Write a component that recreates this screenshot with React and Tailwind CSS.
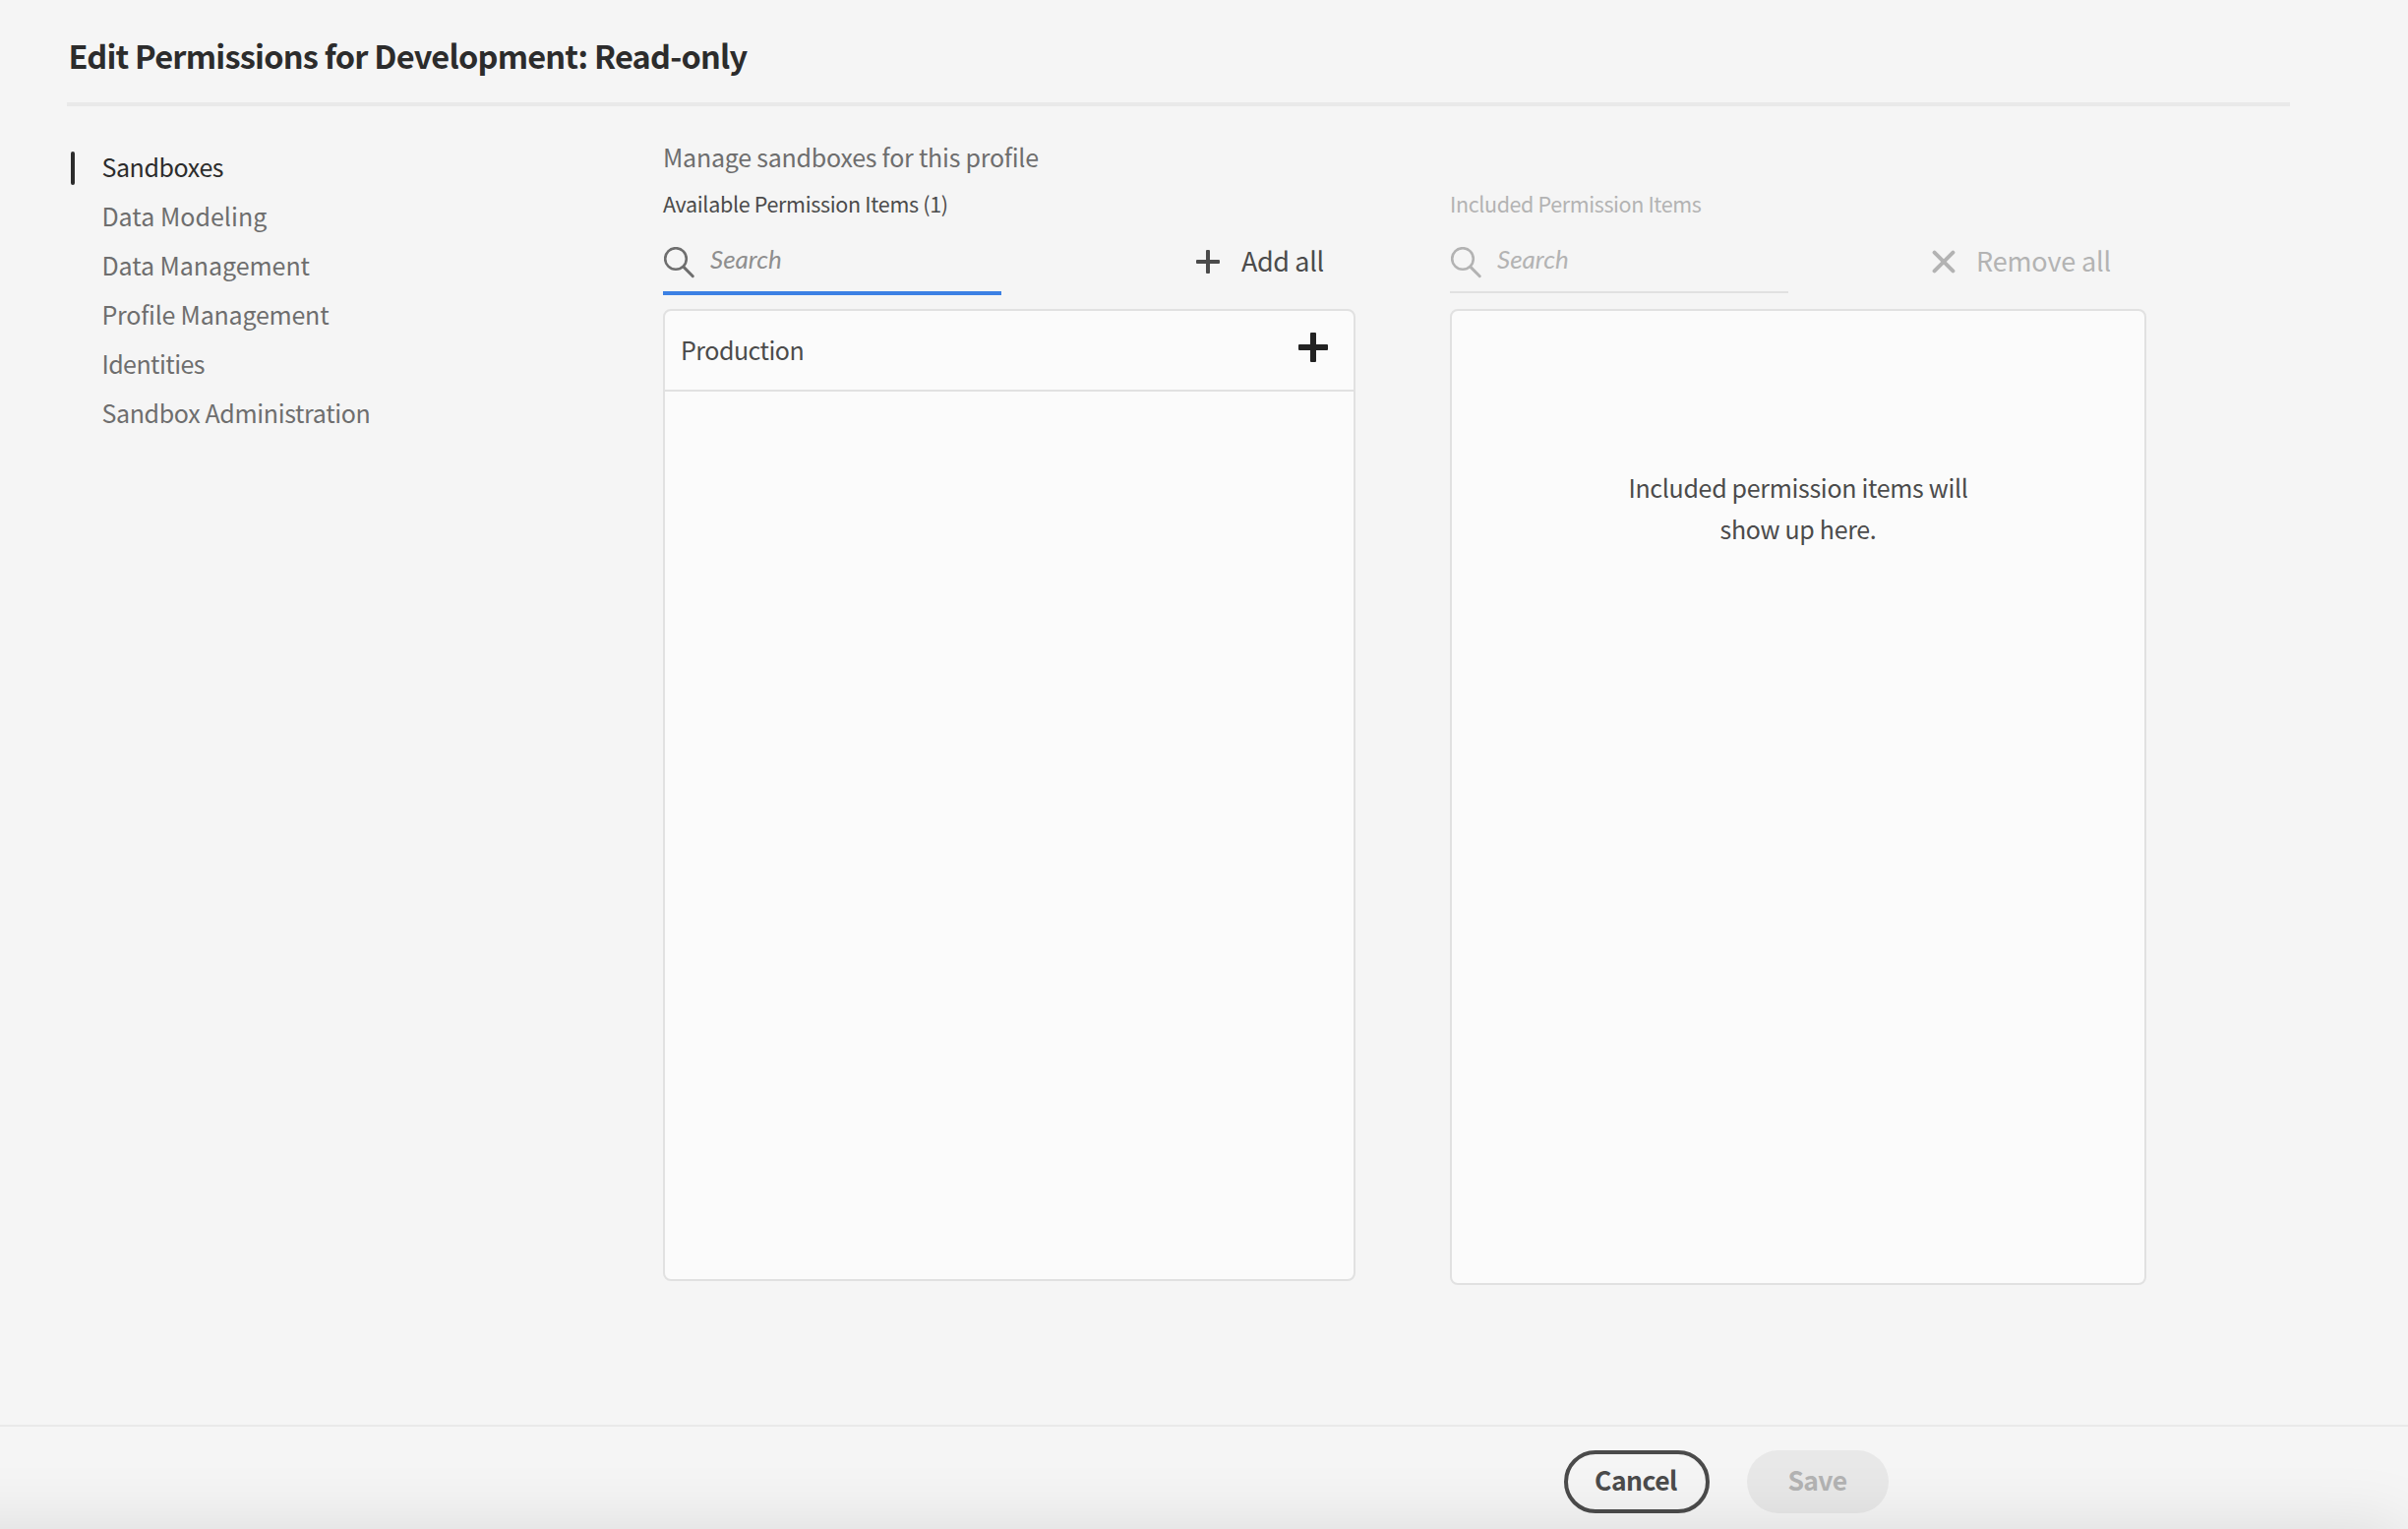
const navItems = [
  { label: 'Sandboxes', active: true, tracking: 'tracking-[-0.4px]' },
  { label: 'Data Modeling', tracking: 'tracking-[0.03px]' },
  { label: 'Data Management', tracking: 'tracking-[-0.05px]' },
  { label: 'Profile Management', tracking: 'tracking-[-0.22px]' },
  { label: 'Identities', tracking: 'tracking-[-0.55px]' },
  { label: 'Sandbox Administration', tracking: 'tracking-[-0.35px]' },
];

function SearchIcon() {
  return (
    <svg className="mt-[5px] ml-px size-8 shrink-0" viewBox="0 0 32 32" fill="none" stroke="currentColor" strokeLinecap="round">
      <circle cx="12" cy="12" r="10.8" strokeWidth="2.6" />
      <path d="M20 20.4 29.3 29.7" strokeWidth="3" />
    </svg>
  );
}

function PlusIcon() {
  return (
    <svg className="mt-0.5 size-6" viewBox="0 0 24 24" fill="currentColor">
      <rect x="10" y="0" width="4" height="24" rx="1" />
      <rect x="0" y="10" width="24" height="4" rx="1" />
    </svg>
  );
}

function CrossIcon() {
  return (
    <svg className="mt-0.5 size-6" viewBox="0 0 24 24" stroke="currentColor" strokeWidth="4" strokeLinecap="round">
      <path d="M2.6 2.6 21.4 21.4M21.4 2.6 2.6 21.4" />
    </svg>
  );
}

function SearchField({ focused }) {
  return (
    <div
      className={
        focused
          ? 'flex h-[68px] w-[344px] items-center border-b-4 border-[#3c81e4] text-[#6e6e6e]'
          : 'flex h-[66px] w-[344px] items-center border-b-2 border-[#e1e1e1] text-[#b3b3b3]'
      }
    >
      <SearchIcon />
      <span
        className={
          focused
            ? "mb-px ml-[15px] font-['Lato',sans-serif] text-[26px] leading-[63px] text-[#8e8e8e] italic"
            : "mb-px ml-[15px] font-['Lato',sans-serif] text-[26px] leading-[63px] text-[#b3b3b3] italic"
        }
      >
        Search
      </span>
    </div>
  );
}

export default function App() {
  return (
    <div className="relative flex h-[1554px] w-[2448px] flex-col overflow-hidden bg-[#f5f5f5] font-['Noto_Sans_CJK_SC',sans-serif] text-[25px] text-[#4b4b4b]">
      <header className="mr-[120px] ml-[68px] h-[108px] border-b-4 border-[#e9e9e9] pt-8">
        <h1 className="pl-[1.5px] text-[32.5px] leading-[48px] font-bold tracking-[-0.77px] whitespace-nowrap text-[#2c2c2c]">
          Edit Permissions for Development: Read-only
        </h1>
      </header>

      <div className="flex flex-1">
        <nav className="w-[674px] pt-9 pl-[72px]">
          <ul>
            {navItems.map((item) => (
              <li key={item.label} className="flex h-[50px]">
                <span className={item.active ? 'mt-[10px] h-[34px] w-1 rounded-sm bg-[#2c2c2c]' : 'w-1'} />
                <span className={`ml-[27.4px] leading-[50px] whitespace-nowrap ${item.tracking} ${item.active ? 'text-[#2c2c2c]' : 'text-[#6e6e6e]'}`}>
                  {item.label}
                </span>
              </li>
            ))}
          </ul>
        </nav>

        <main className="pt-[35px]">
          <p className="h-8 leading-8 tracking-[-0.24px] text-[#6e6e6e]">Manage sandboxes for this profile</p>

          <div className="mt-4 flex gap-24">
            <section className="w-[704px]">
              <h2 className="text-[21.5px] leading-8 tracking-[-0.32px]">Available Permission Items (1)</h2>
              <div className="mt-[9px] flex h-[68px]">
                <SearchField focused />
                <button className="ml-[198px] flex h-[66px] items-center gap-[22px] text-[27px] tracking-[-0.4px] whitespace-nowrap">
                  <PlusIcon />
                  Add all
                </button>
              </div>
              <div className="mt-[14px] h-[988px] rounded-lg border-2 border-[#e1e1e1] bg-[#fbfbfb]">
                <div className="flex h-[82px] items-center justify-between border-b-2 border-[#e1e1e1] pr-[26px] pb-px pl-4">
                  <span className="tracking-[-0.5px]">Production</span>
                  <svg className="mb-[5px] size-[30px]" viewBox="0 0 30 30" fill="#222222">
                    <rect x="12" y="0" width="6" height="30" rx="1" />
                    <rect x="0" y="12" width="30" height="6" rx="1" />
                  </svg>
                </div>
              </div>
            </section>

            <section className="w-[708px]">
              <h2 className="text-[21.5px] leading-8 tracking-[-0.38px] text-[#b3b3b3]">Included Permission Items</h2>
              <div className="mt-[9px] flex h-[68px]">
                <SearchField />
                <button className="ml-[146px] flex h-[66px] items-center gap-[21px] text-[27px] tracking-[-0.15px] whitespace-nowrap text-[#b3b3b3]">
                  <CrossIcon />
                  Remove all
                </button>
              </div>
              <div className="mt-[14px] flex h-[992px] justify-center rounded-lg border-2 border-[#e1e1e1] bg-[#fbfbfb] pt-[158px]">
                <p className="w-[380px] text-center leading-[42px] tracking-[-0.32px]">Included permission items will show up here.</p>
              </div>
            </section>
          </div>
        </main>
      </div>

      <footer className="flex h-[106px] gap-[38px] border-t-2 border-[#e9e9e9] pt-6 pl-[1590px]">
        <button className="flex h-16 w-[148px] items-center justify-center rounded-full border-4 border-[#4b4b4b] pr-[2px] pb-1 text-[26.5px] font-bold tracking-[-0.5px]">
          Cancel
        </button>
        <button className="flex h-16 w-36 items-center justify-center rounded-full bg-[#e8e8e8] pr-px pb-1 text-[26.5px] font-bold tracking-[-0.6px] text-[#b3b3b3]">
          Save
        </button>
      </footer>

      <div className="pointer-events-none absolute top-full -left-[200px] h-[200px] w-[2645px] shadow-[0_0_70px_rgba(0,0,0,0.115)]" />
    </div>
  );
}
